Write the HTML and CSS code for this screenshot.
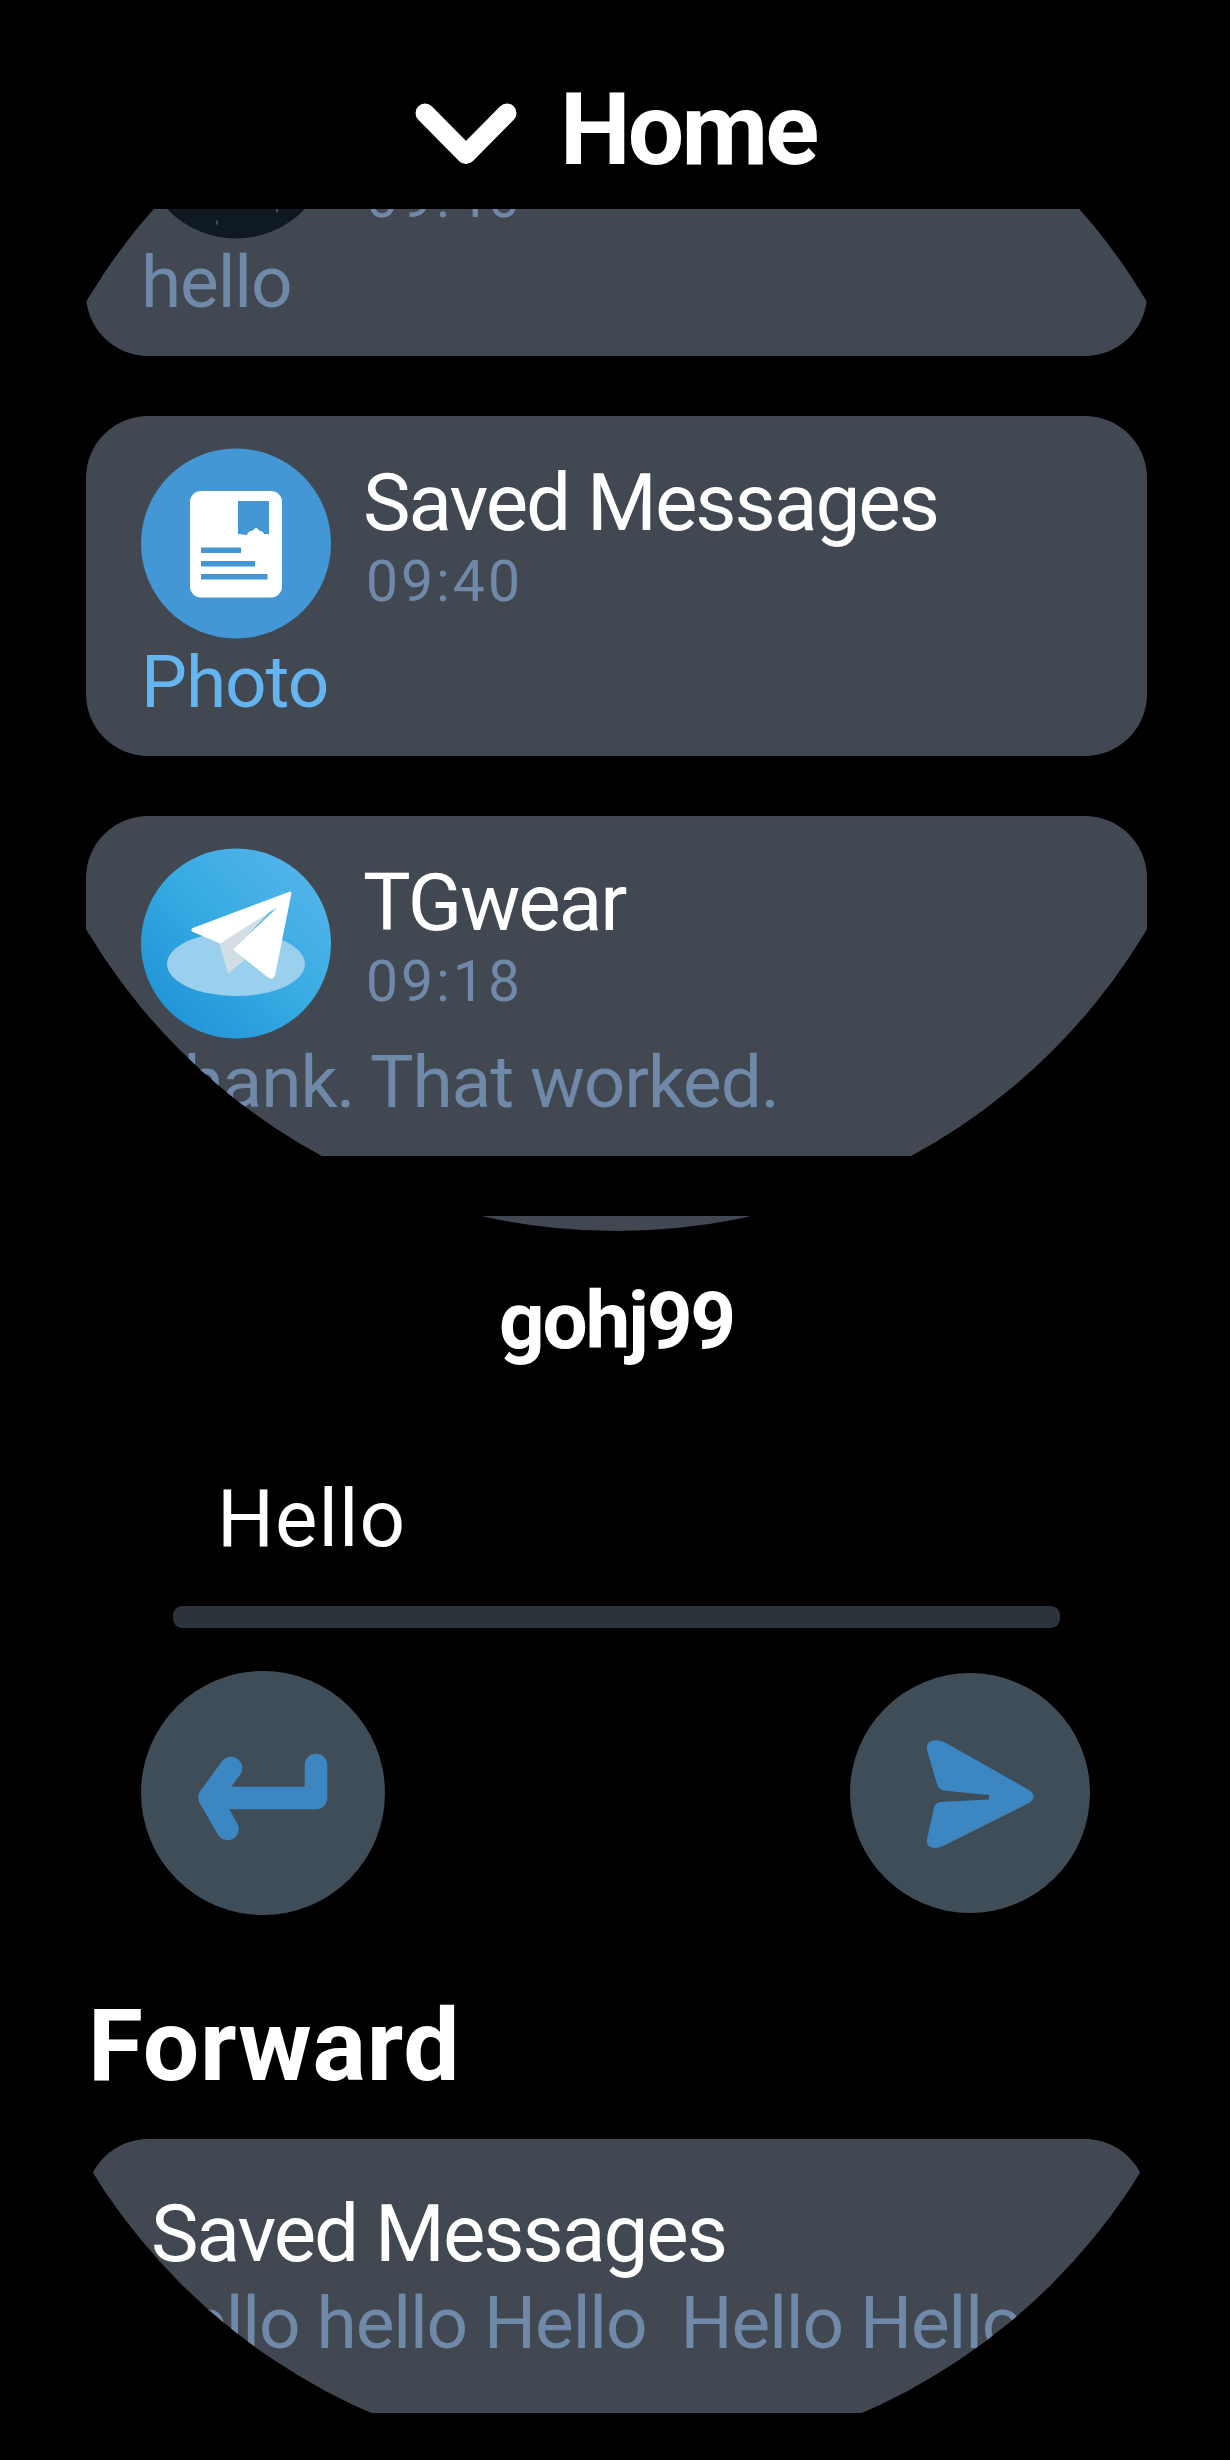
FILE: index.html
```html
<!DOCTYPE html>
<html lang="en">
<head>
<meta charset="utf-8">
<title>TGwear</title>
<link rel="stylesheet" href="styles.css">
</head>
<body>
<main class="watch watch-home">
  <header class="home-header">
    <svg class="chevron" width="102" height="62" viewBox="0 0 102 62"><path d="M10 10 51 51.500 92 10"/></svg>
    <h1 class="title">Home</h1>
  </header>
  <section class="chats">
    <article class="card chat">
      <div class="chat-top">
        <svg class="avatar" viewBox="0 0 190 190"><circle cx="95" cy="95" r="95" fill="#0f1922"/><path d="M76 172v4M136 160v4" stroke="#3a4c5e" stroke-width="2"/></svg>
        <div class="chat-head"><div class="name name-tall">&nbsp;</div><div class="time">09:40</div></div>
      </div>
      <p class="preview">hello</p>
    </article>
    <article class="card chat">
      <div class="chat-top">
        <svg class="avatar" viewBox="0 0 190 190">
          <circle cx="95" cy="95" r="95" fill="#4497d5"/>
          <rect x="49" y="42.500" width="92" height="106.500" rx="11" fill="#fff"/>
          <path d="M97 52.500h31v33h-5q-1-3-4-3l-4-3.500-4 3.500q-4 0-5 4l-9-1zM60 99h40v5.500H60zM60 112.500h54v5.500H60zM60 125.500h66.500v5.500H60z" fill="#4497d5"/>
        </svg>
        <div class="chat-head"><div class="name">Saved Messages</div><div class="time">09:40</div></div>
      </div>
      <p class="preview media">Photo</p>
    </article>
    <article class="card chat">
      <div class="chat-top">
        <svg class="avatar" viewBox="0 0 190 190">
          <defs><linearGradient id="sky" x1="0.15" y1="0.85" x2="0.85" y2="0.15"><stop offset="0" stop-color="#2396d8"/><stop offset=".55" stop-color="#38ace3"/><stop offset="1" stop-color="#50b3e9"/></linearGradient></defs>
          <circle cx="95" cy="95" r="95" fill="url(#sky)"/>
          <ellipse cx="95" cy="115.500" rx="69" ry="32" fill="#9acfee"/>
          <path d="M78 94 136 56 93 101 104 111 87 125z" fill="#d3dde4"/>
          <path d="M149 43 Q151 43 150 47L134 127Q132 132 127 129L92 101 136 59 79 95 51 83Q49 80 53 79z" fill="#fff"/>
        </svg>
        <div class="chat-head"><div class="name">TGwear</div><div class="time">09:18</div></div>
      </div>
      <p class="preview">Thank. That worked.</p>
    </article>
    <article class="card chat"></article>
  </section>
</main>
<main class="watch watch-chat">
  <h2 class="peer">gohj99</h2>
  <div class="field">Hello</div>
  <div class="rule"></div>
  <div class="actions">
    <svg class="btn-enter" viewBox="0 0 244 244"><circle cx="122" cy="122" r="122"/><path d="M175 94V127H68.500M90 97 68.500 126.500 86.500 158"/></svg>
    <svg class="btn-send" viewBox="0 0 240 240"><circle cx="120" cy="120" r="120"/><path d="M77 77Q76 67 86 67.300 91 67 96 70L180 117.500Q187 123.500 180 129.500L94 172.500Q87 176 82 174.500 76 173 77 166L84 135Q85 130 90 129L139 126.500V122L97 118Q88 117 87 111z"/></svg>
  </div>
  <h2 class="title forward-title">Forward</h2>
  <article class="card forward">
    <div class="name">Saved Messages</div>
    <p class="preview">hello hello Hello&nbsp; Hello Hello</p>
  </article>
</main>
</body>
</html>
```
FILE: styles.css
```css
* { box-sizing: border-box; margin: 0; padding: 0; }
body { width: 1230px; height: 2460px; overflow: hidden; background: #000; color: #fff; font-family: Roboto, "Liberation Sans", sans-serif; }
svg { display: block; flex: none; }

/* round watch face: everything outside the circle is cut off */
.watch { width: 1233px; border-radius: 50%; overflow: hidden; }
.watch-home { height: 1231px; display: flex; flex-direction: column; }
.watch-chat { height: 1233px; padding: 43px 86px 0; }

.title { font-size: 100px; line-height: 118px; font-weight: 700; letter-spacing: -2.8px; }
.home-header { flex: none; height: 209px; padding: 71px 0 0 415px; display: flex; gap: 43px; }
.chevron { margin-top: 32px; fill: none; stroke: #fff; stroke-width: 19px; stroke-linecap: round; stroke-linejoin: round; }

.chats { flex: 1; min-height: 0; overflow: hidden; padding: 0 86px; display: flex; flex-direction: column; gap: 60px; }
.card { flex: none; background: #414852; border-radius: 62px; white-space: nowrap; }
.chat { height: 340px; padding: 32px 55px 0; }
.chat:first-child { margin-top: -193px; }
.chat-top { display: flex; gap: 32px; height: 191px; }
.avatar { width: 190px; height: 191px; }
.chat-head { padding-top: 8px; }
.name { font-size: 80px; line-height: 94px; letter-spacing: -2px; }
.name-tall { line-height: 110px; }
.time { font-size: 57px; line-height: 63px; letter-spacing: 3px; padding-left: 3px; color: #7089a8; }
.preview { font-size: 73px; line-height: 86px; letter-spacing: -1.1px; color: #7089a8; }
.media { color: #64b5ef; }

.peer { font-size: 80px; line-height: 94px; font-weight: 700; letter-spacing: -2.2px; text-align: center; }
.field { margin: 104px 87px 0; padding: 0 44px; height: 134px; font-size: 80px; line-height: 94px; letter-spacing: 1px; }
.rule { margin: 0 87px; height: 22px; border-radius: 9px; background: #2c333b; }
.actions { margin-top: 43px; padding: 0 57px 0 55px; display: flex; justify-content: space-between; align-items: center; }
.actions circle { fill: #3f4d59; }
.btn-enter { width: 244px; height: 244px; }
.btn-enter path { fill: none; stroke: #3c86c2; stroke-width: 22.500px; stroke-linecap: round; stroke-linejoin: round; }
.btn-send { width: 240px; height: 240px; }
.btn-send path { fill: #3c86c2; }
.forward-title { margin: 72px 0 0 2px; letter-spacing: 0.8px; }
.forward { margin-top: 34px; height: 274px; padding: 48px 65px 0; }
.forward .preview { margin-left: -2px; line-height: 84px; }
```
